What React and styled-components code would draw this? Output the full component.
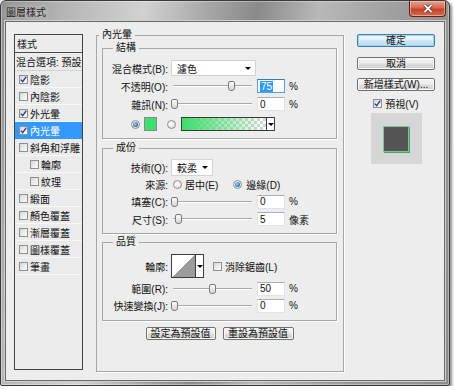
import React from 'react';
import styled, { createGlobalStyle } from 'styled-components';

const GlobalStyle = createGlobalStyle`
  html, body { margin: 0; padding: 0; background: #fff; }
  body {
    font-family: "Liberation Sans", "Noto Sans CJK TC", sans-serif;
    font-size: 10px;
    color: #111;
  }
  * { box-sizing: border-box; }
`;

const Window = styled.div`
  width: 450px;
  height: 386px;
  display: flex;
  flex-direction: column;
  border: 1px solid #3a3a3a;
  border-radius: 6px 6px 2px 2px;
  background: linear-gradient(100deg, #8e8e8e 0%, #b4b4b4 12%, #d2d2d2 28%, #a8a8a8 40%, #8a8a8a 50%, #b8b8b8 62%, #9a9a9a 80%, #8c8c8c 100%);
  box-shadow: 2px 2px 3px rgba(0, 0, 0, 0.45), inset 0 0 0 1px rgba(255, 255, 255, 0.35);
`;

const TitleBar = styled.div`
  height: 20px;
  display: flex;
  align-items: center;
  padding-left: 5px;
`;

const Title = styled.span`
  font-size: 10px;
  color: #1a1a1a;
  text-shadow: 0 0 6px rgba(255, 255, 255, 0.9);
`;

const CloseButton = styled.div`
  margin-left: auto;
  margin-right: 3px;
  align-self: flex-start;
  width: 37px;
  height: 16px;
  display: flex;
  align-items: center;
  justify-content: center;
  border: 1px solid #5e2216;
  border-top: none;
  border-radius: 0 0 4px 4px;
  background: linear-gradient(#e8a090 0%, #d66a52 45%, #c2432a 55%, #d46a4a 100%);
  box-shadow: inset 0 0 0 1px rgba(255, 220, 200, 0.5);
`;

const Client = styled.div`
  flex: 1;
  margin: 0 4px 4px 4px;
  border: 1px solid #6a6a6a;
  box-shadow: 0 0 0 1px #cfcfcf;
  background: #ededed;
  display: flex;
  align-items: flex-start;
`;

/* left list */
const StyleList = styled.div`
  margin: 12px 0 0 8px;
  width: 69px;
  height: 336px;
  border: 1px solid #444;
  background: #ececec;
  display: flex;
  flex-direction: column;
`;

const ListHead = styled.div`
  height: 18px;
  display: flex;
  align-items: center;
  padding-left: ${p => p.pad || 2}px;
  border-bottom: 1px solid ${p => p.line};
  white-space: nowrap;
`;

const ListItem = styled.div`
  height: 17px;
  display: flex;
  align-items: center;
  gap: 2px;
  padding-left: ${p => (p.sub ? 15 : 4)}px;
  background: ${p => (p.active ? '#3399ff' : '#ebebeb')};
  color: ${p => (p.active ? '#fff' : '#111')};
  border-bottom: 1px solid ${p => (p.active ? '#3399ff' : '#f8f8f8')};
  white-space: nowrap;
`;

const CheckBox = styled.span`
  width: 9px;
  height: 9px;
  flex-shrink: 0;
  margin-left: ${p => p.ml || 0}px;
  display: inline-flex;
  align-items: center;
  justify-content: center;
  border: 1px solid #8e8f8f;
  background: linear-gradient(135deg, #d8d8d8, #fdfdfd);
`;

/* group boxes */
const Group = styled.fieldset`
  margin: ${p => p.mt || 0}px 0 0 ${p => p.ml || 0}px;
  padding: ${p => p.pt || 0}px ${p => p.pr || 0}px 0 ${p => p.pl || 0}px;
  width: ${p => p.w}px;
  height: ${p => p.h}px;
  min-inline-size: 0;
  border: 1px solid #a6a6a6;
  box-shadow: 1px 1px 0 #fff;
  display: flex;
  flex-direction: column;
`;

const Legend = styled.legend`
  margin-left: ${p => p.ml || 0}px;
  padding: 0 3px;
  font-size: 10px;
  line-height: 12px;
  height: 12px;
`;

const Row = styled.div`
  height: ${p => p.h || 18}px;
  margin-top: ${p => p.mt || 0}px;
  padding-left: ${p => p.pl || 0}px;
  display: flex;
  align-items: center;
  white-space: nowrap;
`;

const Label = styled.span`
  width: 65px;
  flex-shrink: 0;
  text-align: right;
  margin-right: 3px;
`;

const Select = styled.div`
  width: ${p => p.w}px;
  height: ${p => p.h || 16}px;
  background: #fff;
  border: 1px solid #d4d4d4;
  display: flex;
  align-items: center;
  justify-content: space-between;
  padding: 0 4px 0 5px;
`;

const Arrow = styled.span`
  width: 0;
  height: 0;
  border-left: 3px solid transparent;
  border-right: 3px solid transparent;
  border-top: 3px solid #000;
`;

const Slider = styled.div`
  width: 83px;
  height: 12px;
  flex-shrink: 0;
  display: flex;
  align-items: center;
  background: linear-gradient(to bottom, transparent 5px, #a8a8a8 5px, #a8a8a8 6px, #fff 6px, #fff 7px, transparent 7px) 2px 0 / 79px 12px no-repeat;
`;

const Thumb = styled.span`
  width: 7px;
  height: 10px;
  border: 1px solid #7a7a7a;
  border-radius: 2px 2px 3px 3px;
  background: linear-gradient(#fdfdfd, #d6d6d6);
`;

const NumBox = styled.div`
  width: 28px;
  height: 14px;
  margin-left: 3px;
  flex-shrink: 0;
  background: #fff;
  border: 1px solid ${p => (p.focus ? '#569de5' : '#e2e3ea')};
  border-top-color: ${p => (p.focus ? '#3d7bad' : '#abadb3')};
  display: flex;
  align-items: center;
  padding-left: 2px;
`;

const Sel = styled.span`
  background: #3399ff;
  color: #fff;
  padding: 0 1px;
`;

const Unit = styled.span`
  margin-left: 4px;
`;

const Radio = styled.span`
  width: 9px;
  height: 9px;
  flex-shrink: 0;
  border-radius: 50%;
  border: 1px solid #8e8f8f;
  background: radial-gradient(circle at 40% 40%, #ffffff, #d4d4d4);
  display: inline-flex;
  align-items: center;
  justify-content: center;
  margin-left: ${p => p.ml || 0}px;
  &::after {
    content: '';
    display: ${p => (p.on ? 'block' : 'none')};
    width: 5px;
    height: 5px;
    border-radius: 50%;
    background: radial-gradient(circle at 40% 40%, #9fdcff, #1d6bb0 70%);
  }
`;

const Swatch = styled.span`
  width: 13px;
  height: 14px;
  margin-left: 4px;
  background: #3ddf6e;
  border: 1px solid #8a8a8a;
`;

const GradientBox = styled.div`
  width: 94px;
  height: 14px;
  margin-left: 5px;
  display: flex;
  border: 1px solid #3a3a3a;
  background: #fff;
`;

const GradientFill = styled.span`
  flex: 1;
  background:
    linear-gradient(to right, #3ddc6a 0%, rgba(61, 220, 106, 0.6) 40%, rgba(61, 220, 106, 0) 100%),
    repeating-conic-gradient(#d6d6d6 0 25%, #ffffff 0 50%) 0 0 / 6px 6px;
`;

const DropPart = styled.span`
  width: 8px;
  display: flex;
  align-items: center;
  justify-content: center;
  border-left: 1px solid #3a3a3a;
  background: #fff;
`;

const RadioText = styled.span`
  margin-left: ${p => p.ml || 3}px;
`;

const Contour = styled.div`
  width: 33px;
  height: 24px;
  display: flex;
  border: 1px solid #3c3c3c;
  background: #fff;
`;

const ContourCurve = styled.span`
  flex: 1;
  background: linear-gradient(to bottom right, #fff 50%, #9c9c9c 50%);
`;

const ButtonRow = styled.div`
  margin-top: 6px;
  display: flex;
  justify-content: center;
  gap: 7px;
`;

const Button = styled.div`
  width: ${p => p.w || 78}px;
  height: 13px;
  margin-top: ${p => p.mt || 0}px;
  flex-shrink: 0;
  display: flex;
  align-items: center;
  justify-content: center;
  border: 1px solid ${p => (p.primary ? '#3c7fb1' : '#707070')};
  border-radius: 2px;
  background: ${p => (p.primary
    ? 'linear-gradient(#f0f8fd 0%, #e3f1fb 45%, #c8e4f6 55%, #bfdff4 100%)'
    : 'linear-gradient(#f4f4f4 0%, #ececec 45%, #dddddd 55%, #cfcfcf 100%)')};
  box-shadow: inset 0 0 0 1px ${p => (p.primary ? '#9fd3f5' : '#fbfbfb')};
  white-space: nowrap;
  font-size: 10px;
  line-height: 1;
`;

const SideColumn = styled.div`
  margin: 12px 0 0 13px;
  width: 78px;
  display: flex;
  flex-direction: column;
  align-items: center;
`;

const PreviewCheck = styled.div`
  margin-top: 6px;
  height: 12px;
  display: flex;
  align-items: center;
  gap: 3px;
`;

const PreviewBox = styled.div`
  margin-top: 4px;
  width: 51px;
  height: 51px;
  background: #d6d6d6;
  display: flex;
  align-items: center;
  justify-content: center;
`;

const PreviewSquare = styled.span`
  width: 26px;
  height: 26px;
  background: #545454;
  border: 1px solid #7cc395;
  box-shadow: 1px 1px 0 #4f9e69;
`;

const Check = ({ checked, ml }) => (
  <CheckBox ml={ml}>
    {checked && (
      <svg width="7" height="7" viewBox="0 0 7 7">
        <path d="M0.8 3.6 L2.7 5.7 L6.3 0.7" fill="none" stroke="#2a3f95" strokeWidth="1.4" />
      </svg>
    )}
  </CheckBox>
);

const SliderField = ({ value }) => (
  <Slider>
    <Thumb style={{ marginLeft: Math.round(value * 76) }} />
  </Slider>
);

const styleItems = [
  { name: '陰影', checked: true },
  { name: '內陰影' },
  { name: '外光暈', checked: true },
  { name: '內光暈', checked: true, active: true },
  { name: '斜角和浮雕' },
  { name: '輪廓', sub: true },
  { name: '紋理', sub: true },
  { name: '緞面' },
  { name: '顏色覆蓋' },
  { name: '漸層覆蓋' },
  { name: '圖樣覆蓋' },
  { name: '筆畫' },
];

export default function App() {
  return (
    <>
      <GlobalStyle />
      <Window>
        <TitleBar>
          <Title>圖層樣式</Title>
          <CloseButton>
            <svg width="10" height="9" viewBox="0 0 10 9">
              <path d="M1.5 1 L8.5 8 M8.5 1 L1.5 8" stroke="#5a1a10" strokeWidth="3.2" />
              <path d="M1.5 1 L8.5 8 M8.5 1 L1.5 8" stroke="#fff" strokeWidth="1.8" />
            </svg>
          </CloseButton>
        </TitleBar>

        <Client>
          <StyleList>
            <ListHead line="#4a4a4a">樣式</ListHead>
            <ListHead line="#d2d2d2" pad={1}>混合選項: 預設</ListHead>
            {styleItems.map(item => (
              <ListItem key={item.name} sub={item.sub} active={item.active}>
                <Check checked={item.checked} />
                {item.name}
              </ListItem>
            ))}
          </StyleList>

          <Group w={248} h={343} mt={7} ml={13} pl={5} pr={6} pt={1}>
            <Legend ml={-3}>內光暈</Legend>

            <Group w={235} h={97} pt={5}>
              <Legend ml={10}>結構</Legend>
              <Row>
                <Label>混合模式(B):</Label>
                <Select w={85}>濾色<Arrow /></Select>
              </Row>
              <Row>
                <Label>不透明(O):</Label>
                <SliderField value={0.75} />
                <NumBox focus><Sel>75</Sel></NumBox>
                <Unit>%</Unit>
              </Row>
              <Row>
                <Label>雜訊(N):</Label>
                <SliderField value={0} />
                <NumBox>0</NumBox>
                <Unit>%</Unit>
              </Row>
              <Row mt={2} pl={28}>
                <Radio on />
                <Swatch />
                <Radio ml={10} />
                <GradientBox>
                  <GradientFill />
                  <DropPart><Arrow /></DropPart>
                </GradientBox>
              </Row>
            </Group>

            <Group w={235} h={92} mt={3} pt={4}>
              <Legend ml={10}>成份</Legend>
              <Row>
                <Label>技術(Q):</Label>
                <Select w={42} h={17}>較柔<Arrow /></Select>
              </Row>
              <Row h={17}>
                <Label>來源:</Label>
                <Radio ml={2} />
                <RadioText>居中(E)</RadioText>
                <Radio ml={15} on />
                <RadioText ml={4}>邊緣(D)</RadioText>
              </Row>
              <Row h={17}>
                <Label>填塞(C):</Label>
                <SliderField value={0} />
                <NumBox>0</NumBox>
                <Unit>%</Unit>
              </Row>
              <Row>
                <Label>尺寸(S):</Label>
                <SliderField value={0.05} />
                <NumBox>5</NumBox>
                <Unit>像素</Unit>
              </Row>
            </Group>

            <Group w={235} h={85} mt={2} pt={5}>
              <Legend ml={10}>品質</Legend>
              <Row h={26}>
                <Label>輪廓:</Label>
                <Contour>
                  <ContourCurve />
                  <DropPart><Arrow /></DropPart>
                </Contour>
                <Check ml={9} />
                <RadioText>消除鋸齒(L)</RadioText>
              </Row>
              <Row h={17} mt={1}>
                <Label>範圍(R):</Label>
                <SliderField value={0.5} />
                <NumBox>50</NumBox>
                <Unit>%</Unit>
              </Row>
              <Row h={17}>
                <Label>快速變換(J):</Label>
                <SliderField value={0} />
                <NumBox>0</NumBox>
                <Unit>%</Unit>
              </Row>
            </Group>

            <ButtonRow>
              <Button w={70}>設定為預設值</Button>
              <Button w={71}>重設為預設值</Button>
            </ButtonRow>
          </Group>

          <SideColumn>
            <Button primary>確定</Button>
            <Button mt={10}>取消</Button>
            <Button mt={8}>新增樣式(W)...</Button>
            <PreviewCheck>
              <Check checked />
              預視(V)
            </PreviewCheck>
            <PreviewBox>
              <PreviewSquare />
            </PreviewBox>
          </SideColumn>
        </Client>
      </Window>
    </>
  );
}
